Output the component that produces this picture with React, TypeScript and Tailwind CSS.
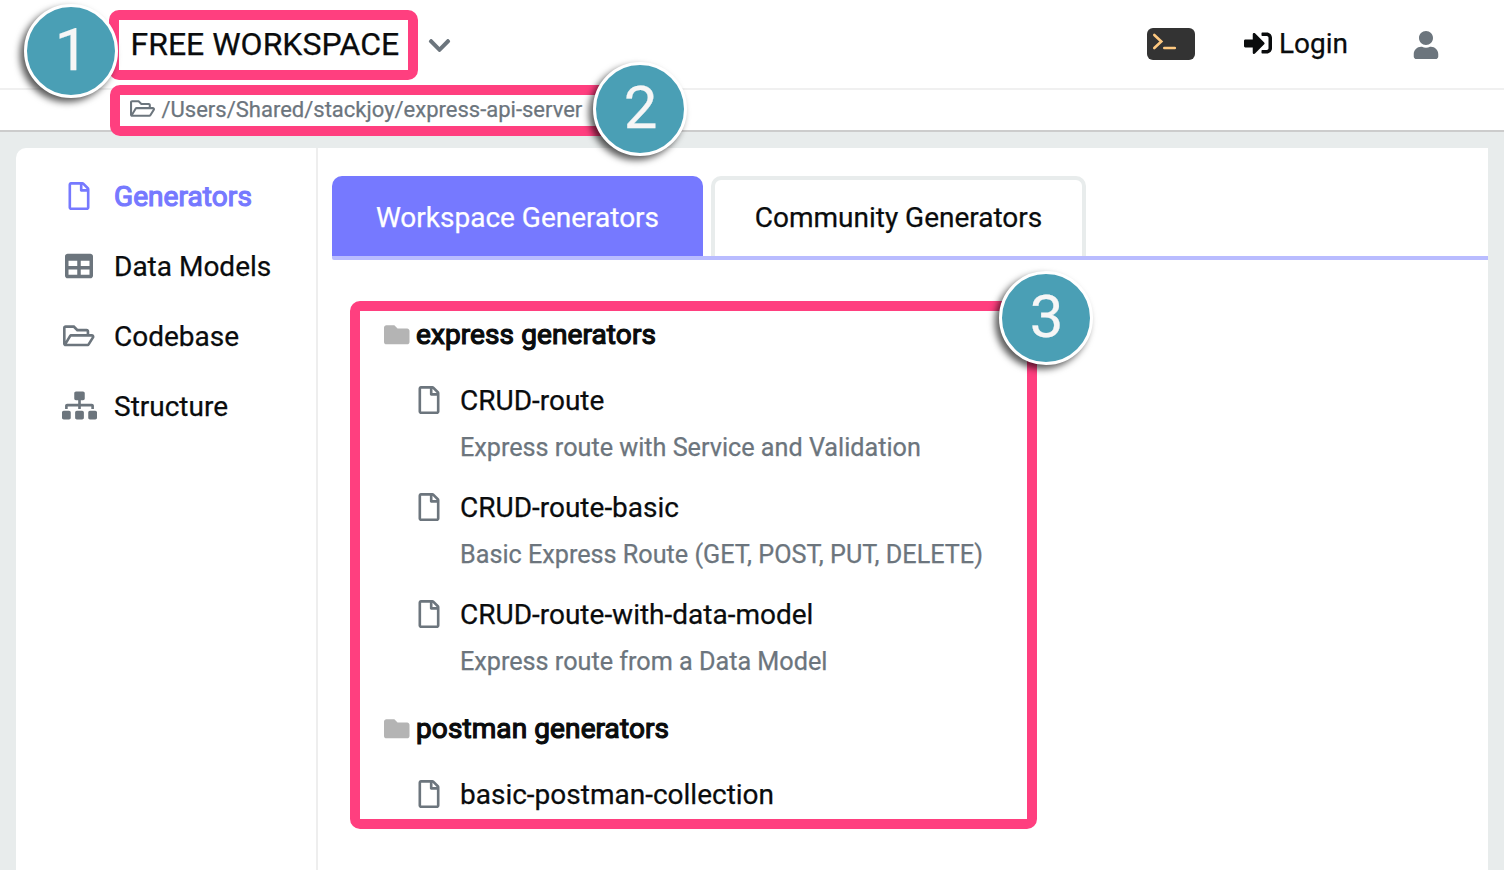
import type { ReactNode } from "react";
import {
  FaChevronDown,
  FaFolder,
  FaRegFile,
  FaRegFolderOpen,
  FaSignInAlt,
  FaSitemap,
  FaTable,
  FaUser,
} from "react-icons/fa";

const groups = [
  {
    name: "express generators",
    items: [
      { name: "CRUD-route", text: "Express route with Service and Validation" },
      { name: "CRUD-route-basic", text: "Basic Express Route (GET, POST, PUT, DELETE)" },
      { name: "CRUD-route-with-data-model", text: "Express route from a Data Model" },
    ],
  },
  { name: "postman generators", items: [{ name: "basic-postman-collection", text: "" }] },
];

function Badge({ n, className }: { n: number; className: string }) {
  return (
    <div
      className={`absolute flex size-[94px] items-center justify-center rounded-full border-[3px] border-white bg-[#4a9fb5] text-[60px] leading-none text-[#f6f6f6] shadow-[-4px_4px_7px_rgba(0,0,0,0.65)] ${className}`}
    >
      <span className="-mt-[3px] ml-[1px]">{n}</span>
    </div>
  );
}

function NavItem({ icon, label, active }: { icon: ReactNode; label: string; active?: boolean }) {
  return (
    <li className={`flex h-[70px] items-center ${active ? "text-[#7679ff]" : "text-[#6c757d]"}`}>
      <span className="-mt-[1px] flex w-[36px] justify-center text-[28px]">{icon}</span>
      <span
        className={`ml-[17px] pt-[2px] ${active ? "tracking-[0.07px] [-webkit-text-stroke:1.2px_currentColor]" : "text-[#0a0c0d]"}`}
      >
        {label}
      </span>
    </li>
  );
}

export default function App() {
  return (
    <div className="relative flex h-[870px] w-[1504px] flex-col overflow-hidden bg-[#e8ecec] font-[Roboto,sans-serif] text-[28px] text-[#0a0c0d] [-webkit-text-stroke:0.25px_currentColor]">
      <header className="flex h-[90px] shrink-0 items-center border-b-2 border-[#f0f0f0] bg-white pl-[130px] pr-[64px]">
        <span className="w-[270px] pl-[0.5px] text-[32px]">FREE WORKSPACE</span>
        <FaChevronDown className="ml-[26.5px] mt-[3px] text-[25px] text-[#6c757d]" />
        <svg className="ml-auto" width="48" height="32" viewBox="0 0 48 32">
          <rect width="48" height="32" rx="6" fill="#333" />
          <path d="M7.3 7l7 6.500-7 6.500M17.300 20h10.500" fill="none" stroke="#ffc980" strokeWidth="2.6" strokeLinecap="round" />
        </svg>
        <FaSignInAlt className="ml-[49px] -mt-[2px] text-[28px]" />
        <span className="ml-[7px]">Login</span>
        <FaUser className="ml-[64px] mt-[2px] text-[28px] text-[#6c757d]" />
      </header>
      <div className="flex h-[42px] shrink-0 items-center border-b-2 border-[#ccc] bg-white pl-[130px] text-[22px] text-[#6c757d]">
        <FaRegFolderOpen className="-mt-[3px] text-[25px]" />
        <span className="-mt-[2px] ml-[6.5px]">/Users/Shared/stackjoy/express-api-server</span>
      </div>
      <div className="mx-4 mt-4 flex flex-1 rounded-tl-[10px] bg-white">
        <ul className="w-[302px] shrink-0 border-r-2 border-[#eee] pl-[45px] pt-[13px]">
          <NavItem icon={<FaRegFile />} label="Generators" active />
          <NavItem icon={<FaTable />} label="Data Models" />
          <NavItem icon={<FaRegFolderOpen className="text-[31.5px]" />} label="Codebase" />
          <NavItem icon={<FaSitemap className="text-[35px]" />} label="Structure" />
        </ul>
        <main className="flex-1 pl-[14px] pt-[28px]">
          <div className="flex h-[84px] gap-2 rounded-bl-[2px] border-b-4 border-[#b9bcff]">
            <div className="flex w-[371px] items-center justify-center rounded-t-[10px] bg-[#7679ff] pt-[3px] text-white">
              Workspace Generators
            </div>
            <div className="flex w-[375px] items-center justify-center rounded-t-[10px] border-4 border-b-0 border-[#e8ecec] pb-[1px]">
              Community Generators
            </div>
          </div>
          <div className="pl-[52px] pt-[50px]">
            {groups.map((g) => (
              <section key={g.name} className="mb-[10px]">
                <h2 className="flex h-[50px] items-center">
                  <FaFolder className="-mt-[1px] text-[25.5px] text-[#b4b4b4]" />
                  <span className="ml-[6.5px] tracking-[0.1px] [-webkit-text-stroke:1.2px_currentColor]">{g.name}</span>
                </h2>
                <div className="flex flex-col pl-[30.5px] pt-[13px]">
                  {g.items.map((i) => (
                    <div key={i.name} className="h-[107px]">
                      <div className="flex h-[54px] items-center">
                        <FaRegFile className="-mt-[1px] text-[28px] text-[#6c757d]" />
                        <span className="ml-[17.5px] pt-[2px]">{i.name}</span>
                      </div>
                      <p className="pl-[45.5px] pt-[1px] text-[25.2px] leading-[40px] text-[#6c757d]">{i.text}</p>
                    </div>
                  ))}
                </div>
              </section>
            ))}
          </div>
        </main>
      </div>
      <div className="absolute left-[109px] top-[10px] h-[70px] w-[309px] rounded-[10px] border-[10px] border-[#ff3f7f]" />
      <div className="absolute left-[110px] top-[85px] h-[51px] w-[530px] rounded-[10px] border-[10px] border-[#ff3f7f]" />
      <div className="absolute left-[350px] top-[301px] h-[528px] w-[687px] rounded-[10px] border-[10px] border-[#ff3f7f]" />
      <Badge n={1} className="left-[24px] top-[4px]" />
      <Badge n={2} className="left-[593px] top-[62px]" />
      <Badge n={3} className="left-[999px] top-[271px]" />
    </div>
  );
}
